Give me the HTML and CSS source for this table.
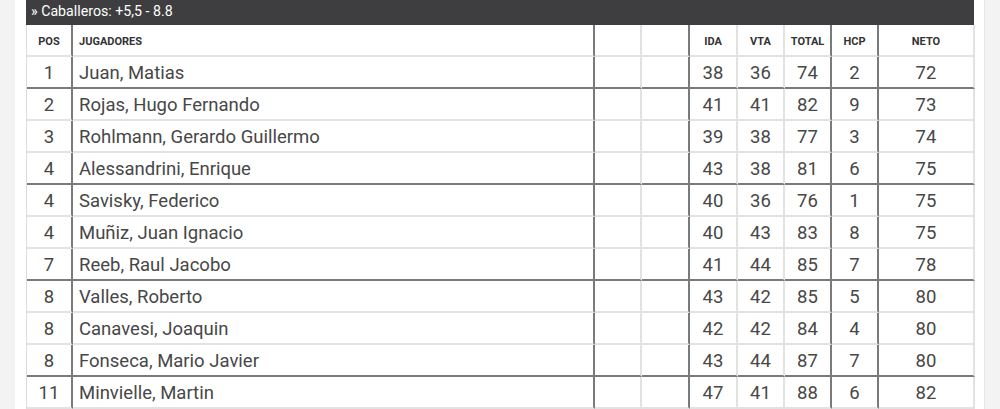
FILE: index.html
```html
<!DOCTYPE html>
<html lang="es">
<head>
<meta charset="utf-8">
<title>Caballeros</title>
<link rel="stylesheet" href="styles.css">
</head>
<body>
<div class="page">
  <div class="panel">
    <div class="title">» Caballeros: +5,5 - 8.8</div>
    <table class="scores">
      <colgroup>
        <col class="c-pos"><col class="c-name"><col class="c-e1"><col class="c-e2">
        <col class="c-ida"><col class="c-vta"><col class="c-tot"><col class="c-hcp"><col class="c-neto">
      </colgroup>
      <thead>
        <tr>
          <th class="pos dk">POS</th>
          <th class="name dk">JUGADORES</th>
          <th></th>
          <th class="dk"></th>
          <th>IDA</th>
          <th>VTA</th>
          <th class="dk">TOTAL</th>
          <th class="dk">HCP</th>
          <th>NETO</th>
        </tr>
      </thead>
      <tbody>
        <tr class="grp"><td class="dk">1</td><td class="name dk">Juan, Matias</td><td></td><td class="dk"></td><td>38</td><td>36</td><td class="dk">74</td><td class="dk">2</td><td>72</td></tr>
        <tr><td class="dk">2</td><td class="name dk">Rojas, Hugo Fernando</td><td></td><td class="dk"></td><td>41</td><td>41</td><td class="dk">82</td><td class="dk">9</td><td>73</td></tr>
        <tr><td class="dk">3</td><td class="name dk">Rohlmann, Gerardo Guillermo</td><td></td><td class="dk"></td><td>39</td><td>38</td><td class="dk">77</td><td class="dk">3</td><td>74</td></tr>
        <tr class="grp"><td class="dk">4</td><td class="name dk">Alessandrini, Enrique</td><td></td><td class="dk"></td><td>43</td><td>38</td><td class="dk">81</td><td class="dk">6</td><td>75</td></tr>
        <tr><td class="dk">4</td><td class="name dk">Savisky, Federico</td><td></td><td class="dk"></td><td>40</td><td>36</td><td class="dk">76</td><td class="dk">1</td><td>75</td></tr>
        <tr><td class="dk">4</td><td class="name dk">Muñiz, Juan Ignacio</td><td></td><td class="dk"></td><td>40</td><td>43</td><td class="dk">83</td><td class="dk">8</td><td>75</td></tr>
        <tr class="grp"><td class="dk">7</td><td class="name dk">Reeb, Raul Jacobo</td><td></td><td class="dk"></td><td>41</td><td>44</td><td class="dk">85</td><td class="dk">7</td><td>78</td></tr>
        <tr><td class="dk">8</td><td class="name dk">Valles, Roberto</td><td></td><td class="dk"></td><td>43</td><td>42</td><td class="dk">85</td><td class="dk">5</td><td>80</td></tr>
        <tr><td class="dk">8</td><td class="name dk">Canavesi, Joaquin</td><td></td><td class="dk"></td><td>42</td><td>42</td><td class="dk">84</td><td class="dk">4</td><td>80</td></tr>
        <tr class="grp"><td class="dk">8</td><td class="name dk">Fonseca, Mario Javier</td><td></td><td class="dk"></td><td>43</td><td>44</td><td class="dk">87</td><td class="dk">7</td><td>80</td></tr>
        <tr><td class="dk">11</td><td class="name dk">Minvielle, Martin</td><td></td><td class="dk"></td><td>47</td><td>41</td><td class="dk">88</td><td class="dk">6</td><td>82</td></tr>
      </tbody>
    </table>
  </div>
</div>
</body>
</html>
```

FILE: styles.css
```css
html, body {
  margin: 0;
  padding: 0;
  background: #f3f3f3;
}

body {
  font-family: Roboto, "Liberation Sans", Arial, sans-serif;
  color: #444;
  overflow: hidden;
  height: 409px;
}

.page {
  padding: 0 15px;
}

.panel {
  background: #fff;
  border-right: 1px solid #e6e6e6;
  padding: 0 10px 0 11px;
  height: 409px;
}

.title {
  background: #3e3e40;
  color: #fff;
  font-size: 14.2px;
  height: 25px;
  line-height: 23px;
  padding-left: 5px;
}

.scores {
  width: 948px;
  table-layout: fixed;
  border-collapse: separate;
  border-spacing: 0;
  border-left: 1px solid #dcdcdc;
}

.c-pos { width: 46px; }
.c-name { width: 522px; }
.c-e1 { width: 47px; }
.c-e2 { width: 48px; }
.c-ida { width: 48px; }
.c-vta { width: 47px; }
.c-tot { width: 47px; }
.c-hcp { width: 47px; }
.c-neto { width: 96px; }

.scores th,
.scores td {
  padding: 2px 0 0;
  text-align: center;
  border-right: 2px solid #e2e2e2;
  border-bottom: 2px solid #e2e2e2;
  box-sizing: border-box;
  white-space: nowrap;
  overflow: hidden;
}

.scores tr {
  height: 32px;
}

.scores th {
  font-size: 11px;
  font-weight: 700;
  color: #333;
}

.scores td {
  font-size: 18.5px;
  color: #474747;
}

.scores .name {
  text-align: left;
  padding-left: 6px;
}

.scores .dk {
  border-right-color: #7a7a7a;
}

.scores tr.grp td {
  border-bottom-color: #7a7a7a;
}
```
